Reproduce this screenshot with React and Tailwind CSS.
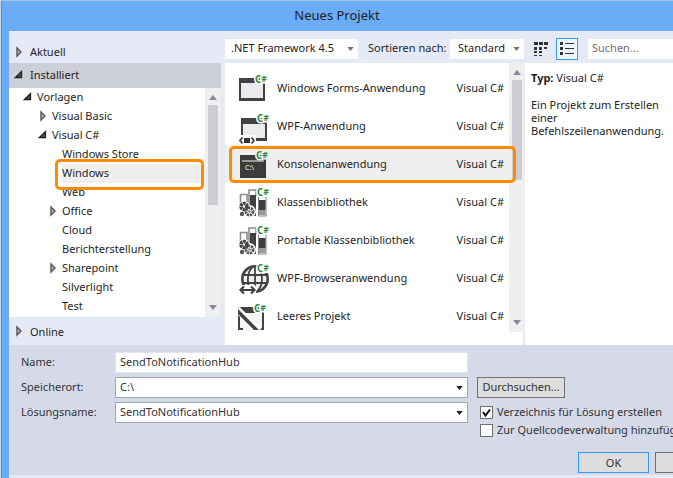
import React from "react";

const tree = [
  { label: "Vorlagen", pad: "pl-[14px]", arrow: "open" },
  { label: "Visual Basic", pad: "pl-[29px]", arrow: "closed" },
  { label: "Visual C#", pad: "pl-[29px]", arrow: "open" },
  { label: "Windows Store", pad: "pl-[39px]" },
  { label: "Windows", pad: "pl-[39px]", selected: true },
  { label: "Web", pad: "pl-[39px]" },
  { label: "Office", pad: "pl-[39px]", arrow: "closed" },
  { label: "Cloud", pad: "pl-[39px]" },
  { label: "Berichterstellung", pad: "pl-[39px]" },
  { label: "Sharepoint", pad: "pl-[39px]", arrow: "closed" },
  { label: "Silverlight", pad: "pl-[39px]" },
  { label: "Test", pad: "pl-[39px]" },
];

const templates = [
  { label: "Windows Forms-Anwendung", Icon: FormsIcon },
  { label: "WPF-Anwendung", Icon: WpfIcon },
  { label: "Konsolenanwendung", Icon: ConsoleIcon, selected: true },
  { label: "Klassenbibliothek", Icon: LibraryIcon },
  { label: "Portable Klassenbibliothek", Icon: LibraryIcon },
  { label: "WPF-Browseranwendung", Icon: BrowserIcon },
  { label: "Leeres Projekt", Icon: EmptyIcon },
];

function Arrow({ kind }) {
  return (
    <svg width="10" height="12" viewBox="0 0 10 12" className="shrink-0" aria-hidden="true">
      {kind === "open" && <path d="M7.5 2.5v6h-6z" fill="#555" stroke="#1e1e1e" strokeWidth="1.3" />}
      {kind === "closed" && <path d="M3 2v8l4-4z" fill="#bbb" stroke="#5c5c5c" strokeWidth="1.5" />}
    </svg>
  );
}

function IconFrame({ children }) {
  return (
    <svg width="34" height="38" viewBox="0 0 34 38" className="shrink-0" aria-hidden="true">
      {children}
    </svg>
  );
}

function Badge({ x, y, halo = "#fff" }) {
  return (
    <text x={x} y={y} fill="#2f8a38" stroke={halo} strokeWidth="3" paintOrder="stroke" fontWeight="700" fontSize="10" fontFamily="'Noto Sans', sans-serif">
      C<tspan fontSize="8" dy="-1">#</tspan>
    </text>
  );
}

function FormsIcon() {
  return (
    <IconFrame>
      <path d="M2 9h26v23H2z" fill="#424242" />
      <path d="M4 14h22v15H4z" fill="#ebebee" />
      <Badge x="18" y="14" />
    </IconFrame>
  );
}

function WpfIcon() {
  return (
    <IconFrame>
      <path d="M4 11h26v23H4z" fill="#424242" />
      <path d="M6 17h22v14H6z" fill="#ebebee" />
      <path d="M0 28h19v10H0z" fill="#fafafa" />
      <path d="M7 31h6v5H7z" fill="#333" />
      <path d="M5.5 30.500L3 33.500l2.500 3M14.500 30.500l2.500 3-2.500 3" fill="none" stroke="#424242" strokeWidth="1.800" />
      <Badge x="20" y="15" />
    </IconFrame>
  );
}

function ConsoleIcon() {
  return (
    <IconFrame>
      <path d="M3 10h26v23H3z" fill="#3c3c3c" />
      <path d="M5 15h22v2H5z" fill="#9a9a9a" />
      <text x="8" y="25" fill="#fff" fontSize="7" fontFamily="'Noto Sans', sans-serif">C:\</text>
      <Badge x="19" y="14" halo="#efefef" />
    </IconFrame>
  );
}

function LibraryIcon() {
  return (
    <IconFrame>
      <path d="M3.500 20v-8.500h6.500V20" fill="#fff" stroke="#8c8c8c" strokeWidth="1.600" />
      <path d="M12 28V7h7v6" fill="none" stroke="#8c8c8c" strokeWidth="1.600" />
      <path d="M13 12h6v21h-6z" fill="#424242" />
      <path d="M21.500 13v20h7.500V13" fill="#fff" stroke="#808080" />
      <path d="M22 17h6.500v10H22z" fill="#3c3c3c" />
      <path d="M22 27h6.500v5H22z" fill="#999" />
      <circle cx="12.500" cy="28.500" r="6.500" fill="#fff" />
      <circle cx="7" cy="23.500" r="5.500" fill="#fff" />
      <circle cx="7" cy="23.500" r="3" fill="none" stroke="#424242" strokeWidth="3.600" strokeDasharray="2.600 .6" />
      <circle cx="12.500" cy="28.500" r="3.600" fill="none" stroke="#505050" strokeWidth="2.800" strokeDasharray="2.200 .8" />
      <circle cx="12.500" cy="28.500" r="1.300" fill="#777" />
      <circle cx="5" cy="31" r="2.200" fill="#555" />
      <Badge x="20" y="13" />
    </IconFrame>
  );
}

function BrowserIcon() {
  return (
    <IconFrame>
      <circle cx="18" cy="20" r="12.700" fill="#f0f0f0" stroke="#424242" strokeWidth="2.600" />
      <path d="M5 16h26M5 24h26M18 7v26M17 7C9 12 9 28 16 33M19 7c8 5 8 21 0 26" fill="none" stroke="#424242" strokeWidth="1.800" />
      <path d="M0 26h18l2 4-2 6H0z" fill="#fff" />
      <path d="M4 31h13M7 27.500L3.500 31 7 34.500M14 27.500l3.500 3.500-3.500 3.500" fill="none" stroke="#424242" strokeWidth="2.200" />
      <path d="M20 4h14v10H20z" fill="#fff" />
      <Badge x="20" y="13" />
    </IconFrame>
  );
}

function EmptyIcon() {
  return (
    <IconFrame>
      <path d="M1 10h26v23H1z" fill="#424242" />
      <path d="M3 16h22v15H3z" fill="#f4f4f4" />
      <path d="M6 34h16v-3H6z" fill="#f4f4f4" />
      <path d="M0 12l22 22" stroke="#fff" strokeWidth="7" />
      <path d="M3 10h15v6H9z" fill="#424242" />
      <path d="M1 12v5l16 16h5z" fill="#424242" />
      <Badge x="17" y="15" />
    </IconFrame>
  );
}

function Caret({ up, className }) {
  return (
    <svg width="8" height="5" viewBox="0 0 8 5" className={className} aria-hidden="true">
      <path d={up ? "M0 5l4-5 4 5z" : "M0 0h8l-4 5z"} fill="currentColor" />
    </svg>
  );
}

function ScrollBar({ thumb }) {
  return (
    <div className="flex w-4 flex-1 flex-col items-center bg-[#efefef] pt-[7px] pb-[7px] text-[#868999]">
      <Caret up className="shrink-0" />
      <div className={`mt-[5px] w-[10px] bg-[#cdcdd3] ${thumb}`} />
      <Caret className="mt-auto shrink-0" />
    </div>
  );
}

function Select({ id, label, value, box, pad = "pl-1", arrow }) {
  return (
    <div className={`relative flex ${box}`}>
      <select id={id} aria-label={label} className={`w-full appearance-none bg-white pr-4 pb-[2px] outline-none ${pad}`}>
        <option>{value}</option>
      </select>
      <Caret className={`pointer-events-none absolute top-1/2 right-1 -mt-[2px] h-[4px] w-[7px] ${arrow}`} />
    </div>
  );
}

function Section({ label, arrow, className }) {
  return (
    <button type="button" className={`flex w-full items-center gap-[6px] pl-[5px] text-left ${className}`}>
      <Arrow kind={arrow} />
      {label}
    </button>
  );
}

export default function App() {
  return (
    <div className="overflow-hidden border-t border-l border-t-[#a9c4de] border-l-[#c4d8ec] bg-[#6aacf6] font-['Noto_Sans',sans-serif] text-[11px] leading-[13px] text-[#1e1e1e]">
      <div className="border-l border-[#4a90dc] pl-[7px]">
        <h1 className="flex h-[30px] items-center justify-center pr-2 pb-[2px] text-[13px]">Neues Projekt</h1>

        <div className="flex bg-[#e6eaf6]">
          <nav className="flex w-[216px] shrink-0 flex-col pr-1">
            <Section label="Aktuell" arrow="closed" className="h-8 pt-[9px]" />
            <Section label="Installiert" arrow="open" className="h-[25px] bg-[#ccceda] pb-[2px]" />
            <div className="relative flex bg-white">
              <ul className="min-w-0 flex-1 pb-[1px]">
                {tree.map((item) => (
                  <li key={item.label} className={item.pad}>
                    <button type="button" className="flex h-[19px] w-full items-center gap-1 text-left">
                      <span className="flex w-[10px] justify-center pb-[2px]"><Arrow kind={item.arrow} /></span>
                      <span className={`flex h-full flex-1 items-center pb-[2px] ${item.selected ? "bg-[#efefef]" : ""}`}>{item.label}</span>
                    </button>
                  </li>
                ))}
              </ul>
              <div className="flex"><ScrollBar thumb="h-[100px]" /></div>
              <div className="pointer-events-none absolute top-[71px] right-[17px] left-[46px] h-[31px] rounded-[5px] border-3 border-[#ff8c00]" />
            </div>
            <Section label="Online" arrow="closed" className="h-[28px]" />
          </nav>

          <div className="min-w-0 flex-1">
            <div className="flex h-8 items-center overflow-hidden pt-[3px]">
              <Select label="Framework" value=".NET Framework 4.5" box="h-5 w-[133px] shrink-0" pad="pl-[6px]" arrow="text-[#777]" />
              <label htmlFor="sort" className="ml-[10px] w-[82px] shrink-0 pb-[2px] whitespace-nowrap">Sortieren nach:</label>
              <Select id="sort" label="Sortieren nach" value="Standard" box="h-5 w-[74px] shrink-0" pad="pl-2" arrow="text-[#777]" />
              <button type="button" aria-label="Kleine Symbole" className="ml-[6px] flex h-[22px] w-[22px] shrink-0 items-center justify-center">
                <svg width="14" height="14" viewBox="0 0 14 14" fill="#333" aria-hidden="true">
                  <path d="M0 0h4v3H0zM5 0h4v3H5zM10 0h4v3h-4zM0 5h3v3H0zM5 5h3v3H5zM10 5h3v2h-3zM0 9h3v2H0zM5 9h3v2H5zM0 13h3v1H0zM5 13h3v1H5z" />
                </svg>
              </button>
              <button type="button" aria-label="Liste" className="ml-1 flex h-[22px] w-[22px] shrink-0 items-center justify-center border border-[#3399ff] bg-[#eef3fc]">
                <svg width="16" height="14" viewBox="0 0 16 14" fill="#333" aria-hidden="true">
                  <path d="M1 0h3v3H1zM1 5h3v3H1zM1 10h3v3H1zM6 1h9v1H6zM6 6h9v1H6zM6 11h9v1H6z" />
                </svg>
              </button>
              <input aria-label="Suchen" placeholder="Suchen..." className="ml-[10px] h-5 min-w-0 flex-1 bg-white pb-[2px] pl-1 outline-none placeholder:text-[#717171]" />
            </div>

            <div className="flex h-[282px] bg-white">
              <div className="relative flex w-[300px] shrink-0">
                <ul className="min-w-0 flex-1 pt-[6px]">
                  {templates.map(({ label, Icon, selected }) => (
                    <li key={label}>
                      <button
                        type="button"
                        className={`flex h-[38px] w-full items-center pr-[5px] pl-3 text-left ${selected ? "bg-[#efefef]" : ""}`}
                      >
                        <Icon />
                        <span className="ml-[6px] flex-1 pb-[2px]">{label}</span>
                        <span className="pb-[2px]">Visual C#</span>
                      </button>
                    </li>
                  ))}
                </ul>
                <div className="flex flex-col">
                  <ScrollBar thumb="h-[100px]" />
                  <div className="h-[13px] border-r-2 border-[#e6eaf6]" />
                </div>
                <div className="pointer-events-none absolute top-[83px] right-[9px] left-[4px] h-[37px] rounded-[5px] border-3 border-[#ff8c00]" />
              </div>
              <section className="min-w-0 flex-1 pt-2 pl-[6px]">
                <p><b>Typ:</b> Visual C#</p>
                <p className="mt-[14px] max-w-[136px]">Ein Projekt zum Erstellen einer Befehlszeilenanwendung.</p>
              </section>
            </div>
          </div>
        </div>

        <form className="border-b-3 border-[#e6eaf6] bg-[#d6dae8] pt-[7px] pb-[2px] text-[#333]">
          <div className="flex items-start">
            <div className="grid w-[459px] shrink-0 grid-cols-[94px_1fr] items-center gap-y-1 pl-3">
              <label htmlFor="name" className="pb-[2px]">Name:</label>
              <input id="name" defaultValue="SendToNotificationHub" className="h-[21px] w-full border border-[#e2e5f0] bg-white pb-[2px] pl-1 outline-none" />
              <label htmlFor="path" className="pb-[2px]">Speicherort:</label>
              <Select id="path" value="C:\" box="h-[21px] border border-[#9ea5b8]" arrow="text-[#1e1e1e]" />
              <label htmlFor="solution" className="pb-[2px]">Lösungsname:</label>
              <Select id="solution" value="SendToNotificationHub" box="h-[21px] border border-[#9ea5b8]" arrow="text-[#1e1e1e]" />
            </div>
            <div className="ml-[9px] min-w-0 flex-1 pt-[25px]">
              <button type="button" className="h-[21px] w-[88px] border border-[#707070] bg-[#dddddd] pb-[2px]">Durchsuchen...</button>
              <div className="mt-[7px] flex flex-col gap-1 pl-[3px] whitespace-nowrap">
                <Check label="Verzeichnis für Lösung erstellen" checked />
                <Check label="Zur Quellcodeverwaltung hinzufügen" />
              </div>
            </div>
          </div>
          <div className="mt-[15px] -mr-[53px] flex justify-end gap-[6px]">
            <button type="button" className="h-[21px] w-[71px] border border-[#3399ff] bg-[#dddddd]">OK</button>
            <button type="button" aria-label="Abbrechen" className="h-[21px] w-[71px] border border-[#707070] bg-[#dddddd]" />
          </div>
        </form>
      </div>
    </div>
  );
}

function Check({ label, checked }) {
  return (
    <label className="flex h-[14px] items-center gap-1">
      <span className="relative flex h-[13px] w-[13px] shrink-0">
        <input type="checkbox" defaultChecked={checked} className="peer h-[13px] w-[13px] appearance-none border border-[#707070] bg-white" />
        <svg viewBox="0 0 13 13" className="pointer-events-none absolute inset-0 hidden peer-checked:block" aria-hidden="true">
          <path d="M3 6l2.500 3.500L10 3.500" fill="none" stroke="#111" strokeWidth="2" />
        </svg>
      </span>
      <span className="pb-[2px]">{label}</span>
    </label>
  );
}
